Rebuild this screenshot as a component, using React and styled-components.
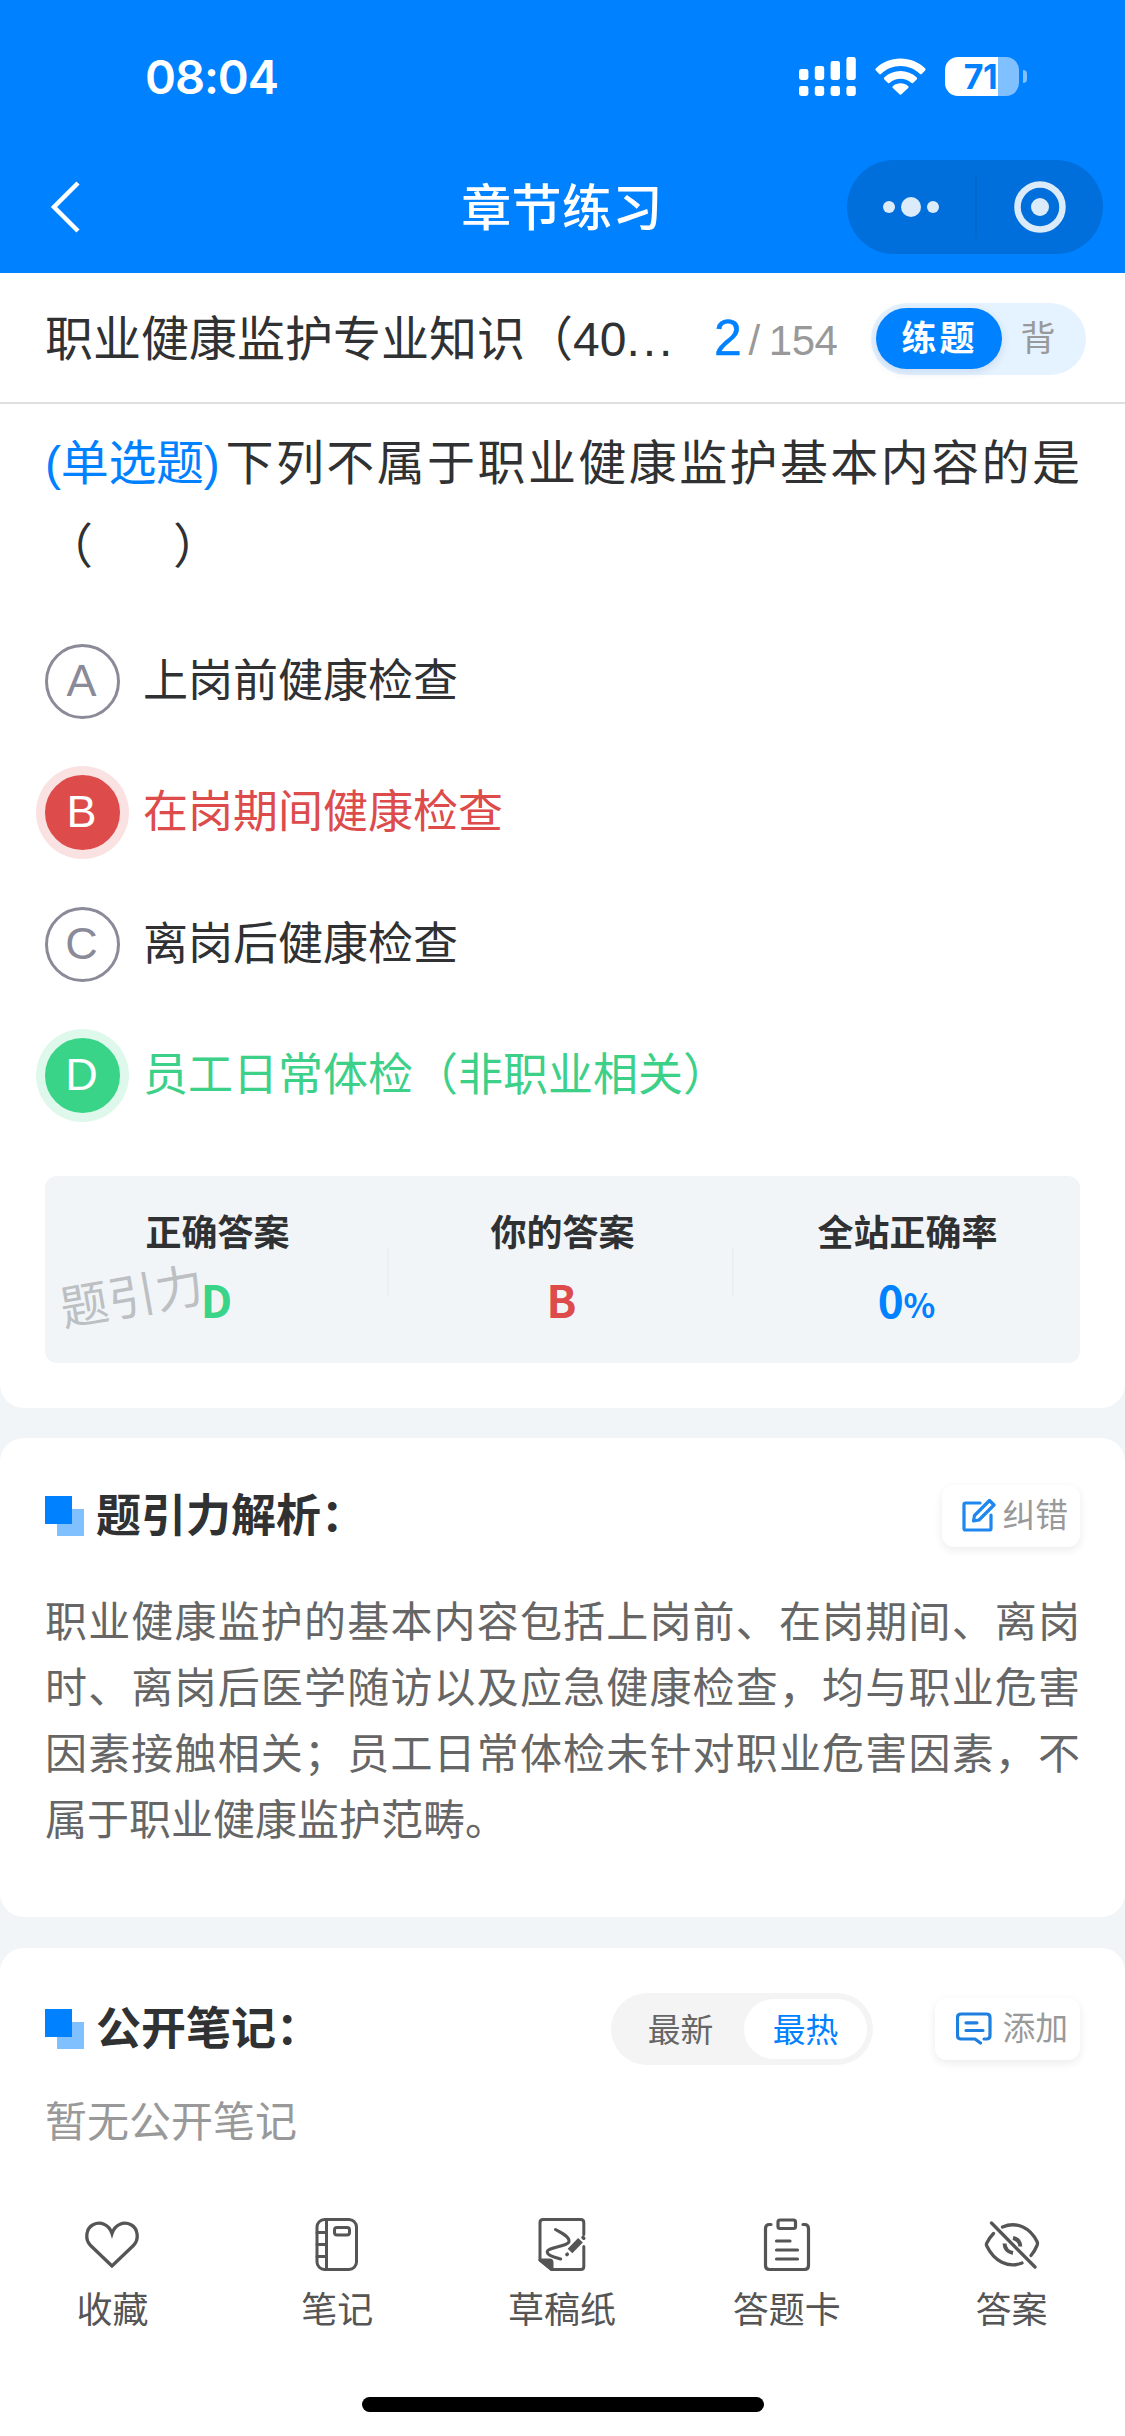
import React from "react";
import styled, { createGlobalStyle } from "styled-components";

const Global = createGlobalStyle`
  * { box-sizing: border-box; }
  body {
    margin: 0;
    background: #f1f5f8;
    color: #303133;
    font-family: "Liberation Sans", "Noto Sans CJK SC", sans-serif;
    text-spacing-trim: space-all;
  }
  svg { display: block; }
`;

const Screen = styled.div`
  width: 1125px;
  height: 2436px;
  display: flex;
  flex-direction: column;
  overflow: hidden;
  background: #f1f5f8;
`;

const Header = styled.header`
  height: 273px;
  background: #0081ff;
  color: #fff;
`;

const StatusBar = styled.div`
  height: 140px;
  padding: 12px 98px 0 145px;
  display: flex;
  align-items: center;
  justify-content: space-between;
`;

const Clock = styled.span`
  font: 600 47px/56px Inter, sans-serif;
  letter-spacing: -1.1px;
  padding-top: 2px;
`;

const StatusIcons = styled.div`
  display: flex;
  align-items: center;
  gap: 19px;
`;

const BatteryWrap = styled.div`
  display: flex;
  align-items: center;
  gap: 4px;
`;

const Battery = styled.div`
  width: 74px;
  height: 39px;
  border-radius: 13px;
  background: linear-gradient(to right, #fff 53px, #80c0ff 53px);
  color: #0081ff;
  font: 700 34px/39px Inter, sans-serif;
  letter-spacing: -0.5px;
  padding-right: 3px;
  text-align: center;
`;

const BatteryTip = styled.div`
  width: 4px;
  height: 13px;
  border-radius: 0 4px 4px 0;
  background: #80c0ff;
`;

const NavBar = styled.div`
  height: 133px;
  padding: 0 22px 0 50px;
  display: grid;
  grid-template-columns: 256px 1fr 256px;
  align-items: center;
`;

const NavTitle = styled.h1`
  margin: 0;
  padding: 4px 29px 0 0;
  text-align: center;
  font-size: 50px;
  font-weight: 500;
  letter-spacing: 0.4px;
  line-height: 60px;
`;

const Capsule = styled.div`
  height: 94px;
  border-radius: 47px;
  background: #006fdb;
  display: grid;
  grid-template-columns: 128px 2px 1fr;
  align-items: center;
  justify-items: center;
`;

const CapsuleLine = styled.i`
  width: 2px;
  height: 64px;
  background: #0069d0;
`;

const SubBar = styled.div`
  height: 131px;
  padding: 3px 39px 0 45px;
  display: flex;
  align-items: center;
  background: #fff;
  border-bottom: 2px solid #dfdfdf;
`;

const Chapter = styled.div`
  flex: none;
  width: 632px;
  padding-top: 2px;
  font-size: 48px;
  line-height: 60px;
  white-space: nowrap;
`;

const Ellipsis = styled.span`
  letter-spacing: 3px;
`;

const Counter = styled.div`
  flex: none;
  width: 140px;
  margin-left: 37px;
  display: flex;
  align-items: baseline;
  color: #999;
  font-size: 42px;
  line-height: 60px;
  letter-spacing: -0.4px;
`;

const Current = styled.span`
  color: #0081ff;
  font-size: 50px;
  -webkit-text-stroke: 0.4px #0081ff;
`;

const Slash = styled.span`
  margin: 0 9px 0 7px;
`;

const ModeSwitch = styled.div`
  flex: none;
  width: 215px;
  height: 72px;
  margin-left: auto;
  padding: 5px;
  display: flex;
  border-radius: 36px;
  background: #e5f2ff;
`;

const ModeItem = styled.span`
  width: ${(p) => (p.$active ? "126px" : "72px")};
  height: 61px;
  border-radius: 31px;
  text-align: center;
  font-size: 35px;
  line-height: 62px;
  letter-spacing: ${(p) => (p.$active ? "3px" : "0")};
  padding-left: ${(p) => (p.$active ? "1px" : "0")};
  font-weight: ${(p) => (p.$active ? 700 : 400)};
  color: ${(p) => (p.$active ? "#fff" : "#999")};
  background: ${(p) => (p.$active ? "#0081ff" : "transparent")};
  box-shadow: ${(p) => (p.$active ? "0 3px 10px rgba(0,60,120,.12)" : "none")};
`;

const Card = styled.section`
  background: #fff;
  padding: ${(p) => p.$pad || "0 45px"};
  height: ${(p) => p.$h}px;
  border-radius: ${(p) => p.$radius || "24px"};
  margin-bottom: ${(p) => p.$gap || 0}px;
`;

const Question = styled.div`
  height: 166px;
  font-size: 48px;
  line-height: 83px;
`;

const QuestionLine = styled.div`
  height: 83px;
  display: flex;
`;

const Kind = styled.span`
  margin-right: 6px;
  color: #0081ff;
  letter-spacing: -0.3px;
`;

const Stem = styled.span`
  flex: 1;
  text-align-last: justify;
  white-space: nowrap;
`;

const Blank = styled.span`
  white-space: pre;
`;

const Options = styled.ul`
  list-style: none;
  margin: 56px 0 0;
  padding: 0;
  display: grid;
  gap: 56.3px;
`;

const tones = {
  plain: { text: "#303133", ring: "#8a8a99", fill: "#fff", letter: "#8a8a99", halo: "transparent" },
  wrong: { text: "#dd4b4b", ring: "#dd4b4b", fill: "#dd4b4b", letter: "#fff", halo: "#fbe2e2" },
  right: { text: "#3cd088", ring: "#39d488", fill: "#39d488", letter: "#fff", halo: "#dff8ec" },
};

const Option = styled.li`
  height: 75px;
  display: flex;
  align-items: center;
  gap: 23px;
  font-size: 45px;
  line-height: 75px;
  color: ${(p) => tones[p.$tone].text};
`;

const Badge = styled.span`
  width: 75px;
  height: 75px;
  padding-right: 2px;
  border-radius: 50%;
  border: 3px solid ${(p) => tones[p.$tone].ring};
  background: ${(p) => tones[p.$tone].fill};
  color: ${(p) => tones[p.$tone].letter};
  box-shadow: 0 0 0 9px ${(p) => tones[p.$tone].halo};
  text-align: center;
  line-height: 68px;
`;

const Stats = styled.div`
  position: relative;
  height: 187px;
  margin-top: 63px;
  padding-top: 34px;
  display: grid;
  grid-template-columns: repeat(3, 1fr);
  border-radius: 12px;
  background: #f2f5f8;
`;

const Stat = styled.div`
  display: flex;
  flex-direction: column;
  align-items: center;
  height: 130px;
  background: linear-gradient(#ebeff2, #ebeff2) right 1px top 38px / 2px 48px no-repeat;
  &:last-of-type { background: none; }
`;

const StatLabel = styled.span`
  font-size: 36px;
  font-weight: 600;
  line-height: 48px;
`;

const StatValue = styled.span`
  margin-top: 15px;
  padding-right: 2px;
  font-family: "Noto Sans CJK SC", sans-serif;
  font-size: 44px;
  font-weight: 700;
  line-height: 52px;
  color: ${(p) => p.$color};
  small { font-size: 33px; font-weight: 600; }
`;

const Watermark = styled.span`
  position: absolute;
  left: 15px;
  top: 92px;
  font-size: 48px;
  font-weight: 400;
  line-height: 60px;
  color: #bcc0c3;
  transform: rotate(-10deg);
`;

const SectionHead = styled.div`
  height: 72px;
  display: flex;
  align-items: center;
`;

const SectionTitle = styled.h2`
  margin: 0 auto 0 12px;
  padding-top: 2px;
  font-size: 45px;
  font-weight: 600;
  line-height: 60px;
`;

const SmallButton = styled.span`
  width: ${(p) => p.$w}px;
  height: 62px;
  padding-right: 12px;
  display: flex;
  align-items: center;
  justify-content: flex-end;
  gap: ${(p) => p.$gap}px;
  border-radius: 12px;
  background: #fff;
  box-shadow: 0 3px 10px rgba(0, 0, 0, 0.08);
  color: #999;
  font-size: 32.8px;
  line-height: 60px;
`;

const Explanation = styled.p`
  margin: 38px 0 0;
  color: #666;
  font-size: 42px;
  line-height: 66px;
  text-align: justify;
`;

const SortSwitch = styled.div`
  width: 262px;
  height: 72px;
  margin-right: 62px;
  padding: 6px;
  display: grid;
  grid-template-columns: 127px 123px;
  border-radius: 36px;
  background: #f4f4f5;
`;

const SortItem = styled.span`
  height: 60px;
  border-radius: 30px;
  text-align: center;
  font-size: 32.8px;
  line-height: 63px;
  color: ${(p) => (p.$active ? "#0081ff" : "#666")};
  background: ${(p) => (p.$active ? "#fff" : "transparent")};
`;

const Empty = styled.p`
  margin: 28px 0 0;
  color: #999;
  font-size: 42px;
  line-height: 60px;
`;

const TabBar = styled.nav`
  flex: 1;
  padding: 9px 1px 0 0;
  display: grid;
  grid-template-columns: repeat(5, 1fr);
  background: #fff;
`;

const Tab = styled.div`
  display: flex;
  flex-direction: column;
  align-items: center;
  gap: 13px;
  color: #555;
  font-size: 36px;
  line-height: 48px;
`;

const HomeArea = styled.div`
  height: 39px;
  display: flex;
  justify-content: center;
  background: #fff;
`;

const HomeBar = styled.i`
  width: 402px;
  height: 15px;
  border-radius: 8px;
  background: #000;
`;

const Line = ({ w = 60, h = 60, sw = 3, children }) => (
  <svg width={w} height={h} viewBox={`0 0 ${w} ${h}`} fill="none" stroke="currentColor"
    strokeWidth={sw} strokeLinecap="round" strokeLinejoin="round">{children}</svg>
);

const SignalIcon = () => (
  <svg width="57" height="39" fill="#fff">
    {[12, 9, 4, 0].map((y, i) => (
      <g key={i}>
        <rect x={i * 15.8} y={y} width="9.4" height={23 - y} rx="2.4" />
        <rect x={i * 15.8} y="29" width="9.4" height="10" rx="2.4" />
      </g>
    ))}
  </svg>
);

const WifiIcon = () => (
  <svg width="51" height="37" viewBox="0 0 51 37" fill="#fff">
    <path d="M25.500 0.500C35 .5 43.500 4 50 10.200c.8.800.8 1.600.1 2.400l-3.100 3.100c-.7.700-1.500.7-2.200 0C39.500 10.800 32.800 8 25.500 8S11.500 10.800 6.200 15.700c-.7.700-1.500.7-2.200 0L.9 12.600c-.7-.8-.7-1.600.1-2.400C7.500 4 16 .5 25.500.5z" />
    <path d="M25.500 13c6.200 0 11.700 2.300 16 6.200.8.700.8 1.500.1 2.300l-3.300 3.200c-.7.700-1.400.7-2.100.1-3-2.600-6.700-4-10.700-4s-7.700 1.400-10.700 4c-.7.600-1.400.6-2.100-.1l-3.300-3.200c-.7-.8-.7-1.600.1-2.300 4.300-3.900 9.800-6.200 16-6.200z" />
    <path d="M25.500 25.200c2.900 0 5.500 1 7.500 2.700.8.600.8 1.400.1 2.100l-6.300 6.100c-.9.800-1.700.8-2.600 0l-6.300-6.100c-.7-.7-.7-1.500.1-2.100 2-1.700 4.600-2.700 7.500-2.700z" />
  </svg>
);

const BackIcon = () => (
  <svg width="32" height="52" fill="none" stroke="#fff" strokeWidth="4.500">
    <path d="M28 2 4 26l24 24" />
  </svg>
);

const DotsIcon = () => (
  <svg width="60" height="24" fill="#dcebfa">
    <circle cx="8" cy="12" r="6" /><circle cx="30" cy="12" r="10" /><circle cx="52" cy="12" r="6" />
  </svg>
);

const TargetIcon = () => (
  <svg width="56" height="54" fill="none" stroke="#dcebfa">
    <circle cx="28" cy="27" r="22.500" strokeWidth="6.500" /><circle cx="28" cy="27" r="9" fill="#dcebfa" stroke="none" />
  </svg>
);

const SquaresIcon = () => (
  <svg width="39" height="40">
    <rect x="12" y="13" width="27" height="27" fill="#80c0ff" />
    <rect width="27" height="28" fill="#0081ff" />
  </svg>
);

const EditIcon = () => (
  <svg width="34" height="36" viewBox="0 0 34 36" fill="none" stroke="#1e87f0" strokeWidth="3.200" strokeLinejoin="round" strokeLinecap="round">
    <path d="M18 5H3.500Q2 5 2 6.500V30.500Q2 32 3.500 32H27.500Q29 32 29 30.500V17" />
    <path d="M12.500 17.500 27.500 2.500l4.500 4.500-15 15-5.500 1z" />
  </svg>
);

const CommentIcon = () => (
  <svg width="36" height="34" viewBox="0 0 36 34" fill="none" stroke="#1e7fe0" strokeWidth="3.200" strokeLinecap="round" strokeLinejoin="round">
    <path d="M28 27h2.500q3.500 0 3.500-3.500V5.500q0-3.500-3.500-3.500H5q-3.500 0-3.500 3.500v18q0 3.500 3.500 3.500H19l5.500 4" />
    <path d="M10 10.800h11M10 18.500h17" />
  </svg>
);

const HeartIcon = () => (
  <Line sw={3.300}>
    <path strokeLinejoin="miter" d="M30 52 8.600 31.500C2.500 25.500 4 14.500 11 10.800c7-3.700 16-.8 19 8.700 3-9.500 12-12.400 19-8.700 7 3.700 8.500 14.700 2.400 20.700z" />
  </Line>
);

const NotebookIcon = () => (
  <Line sw={3}>
    <rect x="10" y="5.500" width="39.500" height="50" rx="7.500" />
    <path d="M19.500 5.500v50M10 18.500h9.500M10 30.500h9.500M10 42.500h9.500" />
    <rect x="27.500" y="13.500" width="15" height="7.500" rx="2.500" />
  </Line>
);

const DraftIcon = () => (
  <Line sw={3}>
    <path d="M51.800 20.500V8.500q0-3-3-3H11q-3 0-3 3V46L19.500 55.500H48.800q3 0 3-3V32.500" />
    <path d="M8 46h9.500q2.500 0 2.500 2.500v7z" fill="currentColor" />
    <path d="M23.500 15.500c7 4 14 7 13.500 12-.6 5-22 5.500-21.800 10.500.2 3.500 7 5 13.500 7" />
    <path d="M48.500 26.200 38 37" strokeWidth="6.500" strokeLinecap="butt" />
    <path d="M35.300 40.200l-.4.400M51 23.400l.8.800" strokeWidth="3.500" />
  </Line>
);

const ClipboardIcon = () => (
  <Line sw={3.200}>
    <path d="M14 10.500h-1.500q-4 0-4 4V51.500q0 4 4 4h35q4 0 4-4V14.500q0-4-4-4H46" />
    <rect x="21" y="6" width="17.500" height="8.500" rx="2" />
    <path d="M19.500 27h13.500M19.500 36h21M19.500 45h21" />
  </Line>
);

const EyeOffIcon = () => (
  <Line sw={3.300}>
    <path d="M9.500 9 53 53" />
    <path d="M20.500 13c14-6 27.500.5 34.500 14.500q1 2 0 4-2.500 6-6 10" />
    <path d="M11.500 19.500Q8 23 4.800 29q-.8 1.500 0 3C12 47 26 54.500 40 49" />
    <path d="M31 24q7 1.500 7.300 8.500" strokeWidth="4" strokeLinecap="butt" />
    <path d="M22.500 29.500q.5 8 8.500 9.500" strokeWidth="4" strokeLinecap="butt" />
  </Line>
);

const options = [
  ["A", "上岗前健康检查", "plain"],
  ["B", "在岗期间健康检查", "wrong"],
  ["C", "离岗后健康检查", "plain"],
  ["D", "员工日常体检（非职业相关）", "right"],
];

const tabs = [
  ["收藏", HeartIcon],
  ["笔记", NotebookIcon],
  ["草稿纸", DraftIcon],
  ["答题卡", ClipboardIcon],
  ["答案", EyeOffIcon],
];

export default function App() {
  return (
    <Screen>
      <Global />
      <Header>
        <StatusBar>
          <Clock>08:04</Clock>
          <StatusIcons>
            <SignalIcon />
            <WifiIcon />
            <BatteryWrap><Battery>71</Battery><BatteryTip /></BatteryWrap>
          </StatusIcons>
        </StatusBar>
        <NavBar>
          <BackIcon />
          <NavTitle>章节练习</NavTitle>
          <Capsule><DotsIcon /><CapsuleLine /><TargetIcon /></Capsule>
        </NavBar>
      </Header>

      <SubBar>
        <Chapter>职业健康监护专业知识（40<Ellipsis>...</Ellipsis></Chapter>
        <Counter><Current>2</Current><Slash>/</Slash>154</Counter>
        <ModeSwitch><ModeItem $active>练题</ModeItem><ModeItem>背</ModeItem></ModeSwitch>
      </SubBar>

      <Card $h={1004} $pad="18px 45px 0" $radius="0 0 24px 24px" $gap={30}>
        <Question>
          <QuestionLine><Kind>(单选题)</Kind><Stem>下列不属于职业健康监护基本内容的是</Stem></QuestionLine>
          <QuestionLine><Blank>（{"\u00a0".repeat(6)}）</Blank></QuestionLine>
        </Question>
        <Options>
          {options.map(([key, text, tone]) => (
            <Option key={key} $tone={tone}><Badge $tone={tone}>{key}</Badge>{text}</Option>
          ))}
        </Options>
        <Stats>
          <Stat><StatLabel>正确答案</StatLabel><StatValue $color="#39d488">D</StatValue></Stat>
          <Stat><StatLabel>你的答案</StatLabel><StatValue $color="#dd4b4b">B</StatValue></Stat>
          <Stat><StatLabel>全站正确率</StatLabel><StatValue $color="#0081ff">0<small>%</small></StatValue></Stat>
          <Watermark>题引力</Watermark>
        </Stats>
      </Card>

      <Card $h={479} $pad="42px 45px 0" $gap={31}>
        <SectionHead>
          <SquaresIcon />
          <SectionTitle>题引力解析：</SectionTitle>
          <SmallButton $w={138} $gap={6}><EditIcon />纠错</SmallButton>
        </SectionHead>
        <Explanation>
          职业健康监护的基本内容包括上岗前、在岗期间、离岗时、离岗后医学随访以及应急健康检查，均与职业危害因素接触相关；员工日常体检未针对职业危害因素，不属于职业健康监护范畴。
        </Explanation>
      </Card>

      <Card $h={257} $pad="45px 45px 0" $radius="24px 24px 0 0">
        <SectionHead>
          <SquaresIcon />
          <SectionTitle>公开笔记：</SectionTitle>
          <SortSwitch><SortItem>最新</SortItem><SortItem $active>最热</SortItem></SortSwitch>
          <SmallButton $w={145} $gap={10}><CommentIcon />添加</SmallButton>
        </SectionHead>
        <Empty>暂无公开笔记</Empty>
      </Card>

      <TabBar>
        {tabs.map(([label, Icon]) => (
          <Tab key={label}><Icon />{label}</Tab>
        ))}
      </TabBar>
      <HomeArea><HomeBar /></HomeArea>
    </Screen>
  );
}
